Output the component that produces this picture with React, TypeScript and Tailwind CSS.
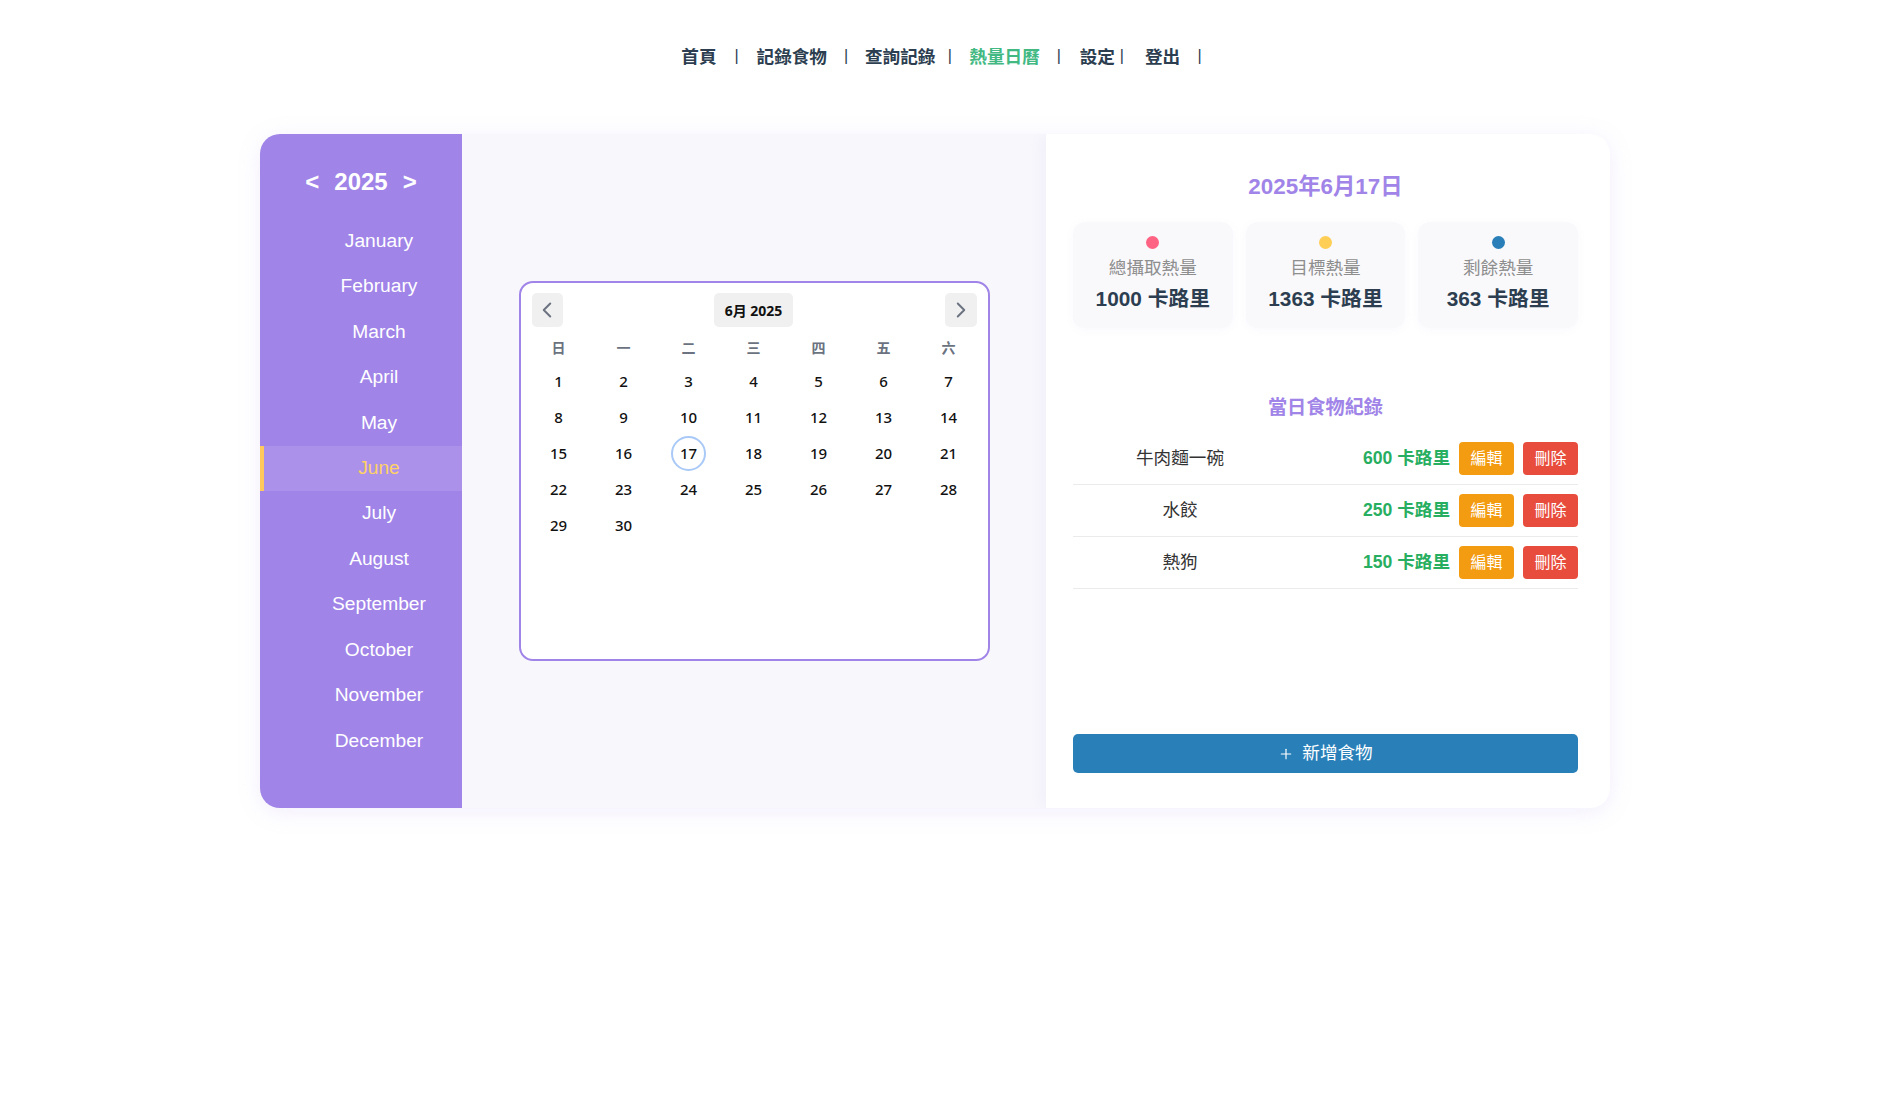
import React from "react";
import { ChevronLeft, ChevronRight, Plus } from "lucide-react";

const months = [
  "January","February","March","April","May","June",
  "July","August","September","October","November","December",
];

const navItems: { label: string; active?: boolean; gapL: number; gapR: number }[] = [
  { label: "首頁", gapL: 20, gapR: 20 },
  { label: "記錄食物", gapL: 19, gapR: 19 },
  { label: "查詢記錄", gapL: 14.5, gapR: 19.5 },
  { label: "熱量日曆", active: true, gapL: 19, gapR: 21 },
  { label: "設定", gapL: 7, gapR: 23 },
  { label: "登出", gapL: 19.5, gapR: 0 },
];

const foods = [
  { name: "牛肉麵一碗", cal: 600 },
  { name: "水餃", cal: 250 },
  { name: "熱狗", cal: 150 },
];

const stats = [
  { dot: "bg-[#ff6384]", label: "總攝取熱量", value: "1000 卡路里" },
  { dot: "bg-[#ffce56]", label: "目標熱量", value: "1363 卡路里" },
  { dot: "bg-[#2a7fb8]", label: "剩餘熱量", value: "363 卡路里" },
];

function Calendar() {
  const weekdays = ["日", "一", "二", "三", "四", "五", "六"];
  const days: number[] = [];
  for (let d = 1; d <= 30; d++) days.push(d);
  return (
    <div
      className="w-[471px] h-[380px] border-2 border-[#a084e8] rounded-[14px] bg-white pt-[10px]"
      style={{ fontFamily: '"Noto Sans", "Noto Sans CJK TC", sans-serif' }}
    >
      <div className="mx-[11px] h-[34px] flex items-center justify-between">
        <div className="w-[31px] h-[34px] rounded-[5px] bg-[#f0f0f0] flex items-center justify-center text-[#6b7280]">
          <ChevronLeft size={26} strokeWidth={1.8} />
        </div>
        <div className="w-[79px] h-[34px] rounded-[5px] bg-[#f0f0f0] flex items-center justify-center text-[14px] font-bold text-[#111]">
          6月 2025
        </div>
        <div className="w-[32px] h-[34px] rounded-[5px] bg-[#f0f0f0] flex items-center justify-center text-[#6b7280]">
          <ChevronRight size={26} strokeWidth={1.8} />
        </div>
      </div>
      <div className="ml-[5.5px] w-[455px] mt-[4px] grid grid-cols-7">
        {weekdays.map((w) => (
          <div key={w} className="h-[32px] flex items-center justify-center text-[14px] font-semibold text-[#6b7280]">
            {w}
          </div>
        ))}
        {days.map((d) => (
          <div key={d} className="h-[36px] flex items-center justify-center">
            {d === 17 ? (
              <span className="w-[35px] h-[35px] rounded-full border-2 border-[#a9c9f7] flex items-center justify-center text-[15px] font-medium text-[#111]">
                {d}
              </span>
            ) : (
              <span className="text-[15px] font-medium text-[#111]">{d}</span>
            )}
          </div>
        ))}
      </div>
    </div>
  );
}

export default function App() {
  return (
    <div
      className="min-h-screen bg-white pb-[290px]"
      style={{ fontFamily: '"Liberation Sans", "Noto Sans CJK TC", sans-serif' }}
    >
      <nav className="pt-[42.5px] flex justify-center items-center h-[68.5px]">
        {navItems.map((n) => (
          <React.Fragment key={n.label}>
            <span
              className={
                "text-[17.6px] font-bold leading-[26px] " +
                (n.active ? "text-[#42b983]" : "text-[#2c3e50]")
              }
              style={{ fontFamily: '"Noto Sans CJK TC", sans-serif' }}
            >
              {n.label}
            </span>
            <span
              className="w-[2px] flex justify-center text-[16px] leading-[26px] text-[#2c3e50]"
              style={{ marginLeft: n.gapL - 1, marginRight: n.gapR - 1 }}
            >
              |
            </span>
          </React.Fragment>
        ))}
      </nav>

      <div className="mt-[65.5px] ml-[260px] w-[1350px] h-[674px] flex rounded-[20px] overflow-hidden bg-[#f8f8fc] shadow-[0_4px_24px_rgba(160,132,232,0.14)]">
        {/* Sidebar */}
        <aside className="w-[202px] bg-[#a084e8] pt-[34px] text-white">
          <div className="h-[28px] flex items-center justify-center gap-[15px] text-[24px] font-bold">
            <span>&lt;</span>
            <span>2025</span>
            <span>&gt;</span>
          </div>
          <ul className="mt-[22.5px]">
            {months.map((m) =>
              m === "June" ? (
                <li
                  key={m}
                  className="h-[45.45px] flex items-center justify-center pl-[36px] text-[19.2px] text-[#ffd166] bg-[#ab91ea] shadow-[inset_4px_0_0_#ffc95c]"
                >
                  {m}
                </li>
              ) : (
                <li key={m} className="h-[45.45px] flex items-center justify-center pl-[36px] text-[19.2px]">
                  {m}
                </li>
              )
            )}
          </ul>
        </aside>

        {/* Middle */}
        <main className="flex-1 flex items-center justify-center">
          <Calendar />
        </main>

        {/* Right panel */}
        <section className="w-[564px] bg-white pl-[27px] pr-[32px] pt-[38px] pb-[35px] flex flex-col shadow-[-6px_0_16px_rgba(160,132,232,0.07)]">
          <h2 className="text-center text-[22.4px] leading-[30px] font-bold text-[#a084e8]">2025年6月17日</h2>
          <div className="mt-[20px] grid grid-cols-3 gap-[13px]">
            {stats.map((s) => (
              <div
                key={s.label}
                className="h-[106px] rounded-[12px] bg-[#f9f9fc] shadow-[0_2px_8px_rgba(160,132,232,0.06)] pt-[13.5px] flex flex-col items-center"
              >
                <span className={"w-[13px] h-[13px] rounded-full " + s.dot} />
                <span className="mt-[7.5px] text-[17.6px] leading-[24px] text-[#8e8e8e]">{s.label}</span>
                <span className="mt-[5px] text-[20.8px] leading-[28px] font-bold text-[#2c3e50]">{s.value}</span>
              </div>
            ))}
          </div>

          <h3 className="mt-[66px] text-center text-[19.2px] leading-[28px] font-bold text-[#a084e8]">當日食物紀錄</h3>
          <div className="mt-[11px]">
            {foods.map((f) => (
              <div key={f.name} className="h-[52px] border-b border-[#ebebeb] flex items-center">
                <span className="w-[214px] text-center text-[17.6px] text-[#333]">{f.name}</span>
                <span className="flex-1 text-right text-[17.6px] font-bold text-[#27ae60]">{f.cal} 卡路里</span>
                <button className="ml-[9px] w-[55px] h-[33px] rounded-[4px] bg-[#f39c12] text-white text-[16px]">編輯</button>
                <button className="ml-[9px] w-[55px] h-[33px] rounded-[4px] bg-[#e74c3c] text-white text-[16px]">刪除</button>
              </div>
            ))}
          </div>

          <button className="mt-auto h-[39px] w-full rounded-[5px] bg-[#2980b9] text-white flex items-center justify-center gap-[8px] text-[17.6px]">
            <Plus size={16} strokeWidth={1.75} />
            <span>新增食物</span>
          </button>
        </section>
      </div>
    </div>
  );
}
